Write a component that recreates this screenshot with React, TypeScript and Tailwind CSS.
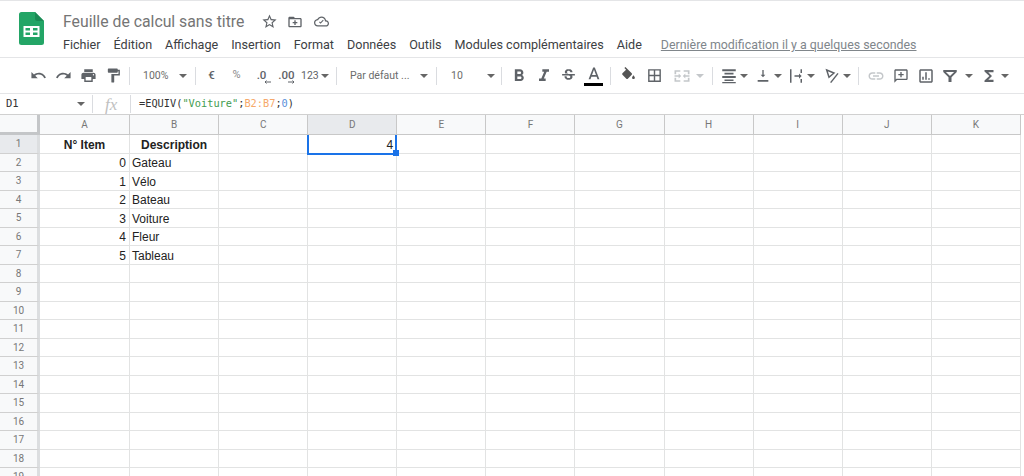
import type { ReactNode } from "react";

const menus = ["Fichier", "Édition", "Affichage", "Insertion", "Format", "Données", "Outils", "Modules complémentaires", "Aide"];
const columns = ["A", "B", "C", "D", "E", "F", "G", "H", "I", "J", "K"];
const rowNumbers = Array.from({ length: 19 }, (_, i) => i + 1);

// contenu des cellules : ligne -> [A, B, D]
const cells: Record<number, { a?: string; b?: string; d?: string; bold?: boolean }> = {
  1: { a: "N° Item", b: "Description", d: "4", bold: true },
  2: { a: "0", b: "Gateau" },
  3: { a: "1", b: "Vélo" },
  4: { a: "2", b: "Bateau" },
  5: { a: "3", b: "Voiture" },
  6: { a: "4", b: "Fleur" },
  7: { a: "5", b: "Tableau" },
};

function Icon({ d, size = 18, className = "" }: { d: string; size?: number; className?: string }) {
  return (
    <svg width={size} height={size} viewBox="0 0 24 24" fill="currentColor" fillRule="evenodd" className={className}>
      <path d={d} />
    </svg>
  );
}

function Caret({ className = "" }: { className?: string }) {
  return <span className={`block h-0 w-0 border-x-[4px] border-t-[4px] border-x-transparent border-t-[#666] ${className}`} />;
}

function Slot({ children, className = "w-[25px]" }: { children: ReactNode; className?: string }) {
  return <div className={`flex h-full shrink-0 items-center justify-center ${className}`}>{children}</div>;
}

function Sep({ className = "" }: { className?: string }) {
  return <div className={`h-[18px] w-px shrink-0 bg-[#dadce0] ${className}`} />;
}

function SmallArrow({ left = false, className = "" }: { left?: boolean; className?: string }) {
  return (
    <svg width="7" height="4" viewBox="0 0 7 4" fill="none" stroke="currentColor" strokeWidth="1" className={`absolute ${className}`}>
      {left ? <path d="M7 2H1M2.500.5L1 2l1.500 1.500" /> : <path d="M0 2h6M4.500.5L6 2 4.500 3.500" />}
    </svg>
  );
}

const paths = {
  undo: "M12.5 8c-2.65 0-5.05.99-6.9 2.6L2 7v9h9l-3.62-3.62c1.39-1.16 3.16-1.88 5.12-1.88 3.54 0 6.55 2.31 7.6 5.5l2.37-.78C21.08 11.03 17.15 8 12.5 8z",
  redo: "M18.4 10.6C16.55 8.99 14.15 8 11.5 8c-4.65 0-8.58 3.03-9.96 7.22L3.9 16c1.05-3.19 4.05-5.5 7.6-5.5 1.95 0 3.73.72 5.12 1.88L13 16h9V7l-3.6 3.6z",
  print: "M19 8H5c-1.66 0-3 1.34-3 3v6h4v4h12v-4h4v-6c0-1.66-1.34-3-3-3zm-3 11H8v-5h8v5zm3-7c-.55 0-1-.45-1-1s.45-1 1-1 1 .45 1 1-.45 1-1 1zm-1-9H6v4h12V3z",
  paint: "M18 4V3c0-.55-.45-1-1-1H5c-.55 0-1 .45-1 1v4c0 .55.45 1 1 1h12c.55 0 1-.45 1-1V6h1v4H9v11c0 .55.45 1 1 1h2c.55 0 1-.45 1-1v-9h8V4h-3z",
  bold: "M15.6 10.79c.97-.67 1.65-1.77 1.65-2.79 0-2.26-1.75-4-4-4H7v14h7.04c2.09 0 3.71-1.7 3.71-3.79 0-1.52-.86-2.82-2.15-3.42zM10 6.5h3c.83 0 1.5.67 1.5 1.5s-.67 1.5-1.5 1.5h-3v-3zm3.5 9H10v-3h3.5c.83 0 1.5.67 1.5 1.5s-.67 1.5-1.5 1.5z",
  italic: "M10 4v3h2.21l-3.42 8H6v3h8v-3h-2.21l3.42-8H18V4z",
  strike: "M7.24 8.75c-.26-.48-.39-1.03-.39-1.67 0-.61.13-1.16.4-1.67.26-.5.63-.93 1.11-1.29.48-.35 1.05-.63 1.7-.83.66-.19 1.39-.29 2.18-.29.81 0 1.54.11 2.21.34.66.22 1.23.54 1.69.94.47.4.83.88 1.08 1.43.25.55.38 1.15.38 1.81h-3.01c0-.31-.05-.59-.15-.85-.09-.27-.24-.49-.44-.68-.2-.19-.45-.33-.75-.44-.3-.1-.66-.16-1.06-.16-.39 0-.74.04-1.03.13-.29.09-.53.21-.72.36-.19.16-.34.34-.44.55-.1.21-.15.43-.15.66 0 .48.25.88.74 1.21.38.25.77.48 1.41.7H7.39c-.05-.08-.11-.17-.15-.25zM21 12v-2H3v2h9.62c.18.07.4.14.55.2.37.17.66.34.87.51.21.17.35.36.43.57.07.2.11.43.11.69 0 .23-.05.45-.14.66-.09.2-.23.38-.42.53-.19.15-.42.26-.71.35-.29.08-.63.13-1.01.13-.43 0-.83-.04-1.18-.13s-.66-.23-.91-.42c-.25-.19-.45-.44-.59-.75-.14-.31-.25-.76-.25-1.21H6.4c0 .55.08 1.13.24 1.58.16.45.37.85.65 1.21.28.35.6.66.98.92.37.26.78.48 1.22.65.44.17.9.3 1.38.39.48.08.96.13 1.44.13.8 0 1.53-.09 2.18-.28s1.21-.45 1.67-.79c.46-.34.82-.77 1.07-1.27s.38-1.07.38-1.71c0-.6-.1-1.14-.31-1.61-.05-.11-.11-.23-.17-.33H21z",
  textColor: "M11 3L5.5 17h2.25l1.12-3h6.25l1.12 3h2.25L13 3h-2zm-1.38 9L12 5.67 14.38 12H9.62z",
  fill: "M16.56 8.94L7.62 0 6.21 1.41l2.38 2.38-5.15 5.15c-.59.59-.59 1.54 0 2.12l5.5 5.5c.29.29.68.44 1.06.44s.77-.15 1.06-.44l5.5-5.5c.59-.58.59-1.53 0-2.12zM19 11.5s-2 2.17-2 3.5c0 1.1.9 2 2 2s2-.9 2-2c0-1.33-2-3.5-2-3.5z",
  borders: "M3 3v18h18V3H3zm8 16H5v-6h6v6zm0-8H5V5h6v6zm8 8h-6v-6h6v6zm0-8h-6V5h6v6z",
  merge: "M3 5h7v2H5v3H3V5zm11 0h7v5h-2V7h-5V5zM3 14h2v3h5v2H3v-5zm16 0h2v5h-7v-2h5v-3zM3 11h5V9l3 3-3 3v-2H3v-2zm18 2h-5v2l-3-3 3-3v2h5v2z",
  halign: "M3 3h18v2.500H3V3zm3 4.700h12v2.200H6V7.700zM3 12h18v2.500H3V12zm3 4.500h12v2H6v-2zM3 20h18v1.500H3V20z",
  valign: "M15.500 10h-2.500V3h-2v7H8.500l3.500 4 3.500-4zM4 18v2.500h16V18H4z",
  wrap: "M4 3h2v18H4V3zm14 0h2v5h-2V3zm0 13h2v5h-2v-5zm-8-5h6V8.500l3.500 3.500-3.500 3.500V13h-6v-2z",
  link: "M3.9 12c0-1.71 1.39-3.1 3.1-3.1h4V7H7c-2.76 0-5 2.24-5 5s2.24 5 5 5h4v-1.900H7c-1.710 0-3.100-1.390-3.100-3.100zM8 13h8v-2H8v2zm9-6h-4v1.900h4c1.710 0 3.100 1.390 3.100 3.100s-1.390 3.100-3.100 3.100h-4V17h4c2.760 0 5-2.240 5-5s-2.240-5-5-5z",
  comment: "M20 2H4c-1.100 0-2 .9-2 2v18l4-4h14c1.100 0 2-.9 2-2V4c0-1.100-.9-2-2-2zm0 14H5.170L4 17.170V4h16v12zM11 14h2v-3h3V9h-3V6h-2v3H8v2h3v3z",
  chart: "M19 3H5c-1.100 0-2 .9-2 2v14c0 1.100.9 2 2 2h14c1.100 0 2-.9 2-2V5c0-1.100-.9-2-2-2zm0 16H5V5h14v14zM7 13h2v4H7zm4-6h2v10h-2zm4 8h2v2h-2z",
  filter: "M3 4h18v2.500l-7 7V20h-4v-6.500l-7-7V4zm3.500 2.500h11L12 12 6.500 6.500z",
  sigma: "M18 4H6v2l6.500 6L6 18v2h12v-3h-7l5-5-5-5h7z",
  star: "M22 9.240l-7.190-.62L12 2 9.190 8.630 2 9.240l5.460 4.730L5.820 21 12 17.270 18.180 21l-1.630-7.030L22 9.240zM12 15.400l-3.760 2.270 1-4.280-3.320-2.880 4.380-.38L12 6.100l1.710 4.040 4.380.38-3.320 2.880 1 4.280L12 15.400z",
  folder: "M20 6h-8l-2-2H4c-1.100 0-2 .9-2 2v12c0 1.100.9 2 2 2h16c1.100 0 2-.9 2-2V8c0-1.100-.9-2-2-2zm0 12H4V8h16v10zm-9-1.500h2V14h2.500v-2H13V9.500h-2V12H8.500v2H11v2.500z",
  cloud: "M19.350 10.040C18.670 6.590 15.640 4 12 4 9.110 4 6.600 5.640 5.350 8.040 2.340 8.360 0 10.910 0 14c0 3.310 2.690 6 6 6h13c2.760 0 5-2.240 5-5 0-2.640-2.050-4.780-4.650-4.960zM19 18H6c-2.210 0-4-1.790-4-4s1.790-4 4-4h.71C7.370 7.690 9.480 6 12 6c3.040 0 5.500 2.460 5.500 5.500v.5H19c1.660 0 3 1.340 3 3s-1.340 3-3 3zm-8.500-2.500L8 13l1.200-1.200 1.300 1.300 3.800-3.800 1.200 1.200-5 5z",
};

function RotateIcon() {
  return (
    <svg width="16" height="16" viewBox="0 0 24 24" fill="none" stroke="currentColor" strokeWidth="2.200">
      <path d="M4 3l11 4.500-7.500 6.500L4 3z" />
      <path d="M21 8L10 22" />
    </svg>
  );
}

function Logo() {
  return (
    <svg width="25" height="33" viewBox="0 0 25 33" className="shrink-0">
      <path d="M2.500 0H16l9 9v21.500a2.500 2.500 0 0 1-2.500 2.500h-20A2.500 2.500 0 0 1 0 30.500v-28A2.500 2.500 0 0 1 2.500 0z" fill="#23a566" />
      <path d="M16 0l9 9h-6.500A2.500 2.500 0 0 1 16 6.500V0z" fill="#1b8a55" />
      <path d="M4.500 14h16v11h-16V14zm2 2v2.500H11V16H6.500zm7.500 0v2.500h4.500V16H14zm-7.500 4.500V23H11v-2.500H6.500zm7.500 0V23h4.500v-2.500H14z" fill="#fff" fillRule="evenodd" />
    </svg>
  );
}

function Toolbar() {
  return (
    <div className="flex h-[37px] items-center border-y border-[#e4e5e7] pl-[26px] text-[#5f6368]">
      <Slot><Icon d={paths.undo} size={17} /></Slot>
      <Slot><Icon d={paths.redo} size={17} /></Slot>
      <Slot><Icon d={paths.print} size={17} /></Slot>
      <Slot><Icon d={paths.paint} size={17} /></Slot>
      <Sep className="ml-[3px]" />
      <div className="ml-[13px] w-[26px] shrink-0 text-[10.5px] text-[#6b6b6b]">100%</div>
      <Slot className="ml-[10px] w-[8px]"><Caret /></Slot>
      <Sep className="ml-[8px]" />
      <Slot className="ml-[3px] w-[25px]"><span className="text-[11.5px] font-medium">€</span></Slot>
      <Slot><span className="text-[11px] text-[#888]">%</span></Slot>
      <Slot>
        <span className="relative text-[11.5px] font-medium">
          .0
          <SmallArrow left className="top-[13px] left-[7px]" />
        </span>
      </Slot>
      <Slot>
        <span className="relative text-[11.5px] font-medium">
          .00
          <SmallArrow className="top-[13px] left-[10px]" />
        </span>
      </Slot>
      <div className="ml-[2px] flex w-[26px] shrink-0 items-center gap-[2px] text-[10.5px]">123<Caret /></div>
      <Sep className="ml-[9px]" />
      <div className="ml-[13px] w-[61px] shrink-0 text-[10.5px] text-[#6b6b6b]">Par défaut ...</div>
      <Slot className="ml-[9px] w-[8px]"><Caret /></Slot>
      <Sep className="ml-[8px]" />
      <div className="ml-[14px] w-[36px] shrink-0 text-[10.5px] text-[#6b6b6b]">10</div>
      <Slot className="w-[8px]"><Caret /></Slot>
      <Sep className="ml-[6px]" />
      <Slot className="ml-[4px] w-[25px]"><Icon d={paths.bold} size={20} /></Slot>
      <Slot><Icon d={paths.italic} size={20} /></Slot>
      <Slot><Icon d={paths.strike} size={17} /></Slot>
      <Slot>
        <div className="flex flex-col items-center">
          <Icon d={paths.textColor} size={20} className="-mb-[2.5px]" />
          <div className="h-[3px] w-[19px] bg-black" />
        </div>
      </Slot>
      <Sep className="ml-[4px]" />
      <Slot className="ml-[5px] w-[25px]"><Icon d={paths.fill} size={17} className="text-[#555]" /></Slot>
      <Slot className="ml-[1px] w-[25px]"><Icon d={paths.borders} size={17} /></Slot>
      <div className="flex h-full shrink-0 items-center text-[#c4c7ca]">
        <Slot className="ml-[2px] w-[25px]"><Icon d={paths.merge} size={20} /></Slot>
        <Slot className="w-[12px]"><Caret className="border-t-[#c4c7ca]" /></Slot>
      </div>
      <Sep className="ml-[6px]" />
      <Slot className="ml-[6px] w-[19px]"><Icon d={paths.halign} size={18} /></Slot>
      <Slot className="w-[12px]"><Caret /></Slot>
      <Slot className="ml-[4px] w-[18px]"><Icon d={paths.valign} size={16} /></Slot>
      <Slot className="w-[12px]"><Caret /></Slot>
      <Slot className="ml-[3px] w-[18px]"><Icon d={paths.wrap} size={18} /></Slot>
      <Slot className="w-[12px]"><Caret /></Slot>
      <Slot className="ml-[6px] w-[18px]"><RotateIcon /></Slot>
      <Slot className="w-[12px]"><Caret /></Slot>
      <Sep className="ml-[5px]" />
      <Slot className="ml-[4px] w-[25px]"><Icon d={paths.link} size={18} className="text-[#c4c7ca]" /></Slot>
      <Slot><Icon d={paths.comment} size={16} /></Slot>
      <Slot><Icon d={paths.chart} size={18} /></Slot>
      <Slot className="ml-[1px] w-[22px]"><Icon d={paths.filter} size={18} /></Slot>
      <Slot className="ml-[2px] w-[12px]"><Caret /></Slot>
      <Slot className="ml-[2px] w-[24px]"><Icon d={paths.sigma} size={18} /></Slot>
      <Slot className="w-[8px]"><Caret className="border-x-[3px] border-t-[3px]" /></Slot>
    </div>
  );
}

function FormulaBar() {
  return (
    <div className="flex h-[20px] items-center text-[#444]">
      <div className="w-[77px] shrink-0 pl-[6px] font-['DejaVu_Sans_Mono',monospace] text-[10.5px] text-[#333]">D1</div>
      <Caret className="shrink-0 border-x-[3px] border-t-[3px]" />
      <Sep className="ml-[7px] h-[15px]" />
      <div className="ml-[12px] w-[25px] shrink-0 font-['Liberation_Serif',serif] text-[17px] leading-none text-[#c0c0c0] italic">fx</div>
      <Sep className="h-[15px] bg-[#b0b0b0]" />
      <div className="ml-[8px] font-['DejaVu_Sans_Mono',monospace] text-[10.3px] whitespace-pre text-[#333]">
        =EQUIV(<span className="text-[#3f9c4f]">"Voiture"</span>;<span className="text-[#f6a96b]">B2:B7</span>;<span className="text-[#5b8fd9]">0</span>)
      </div>
    </div>
  );
}

function Sheet() {
  return (
    <div className="relative grid grid-cols-[40px_90px_repeat(10,89.1px)] grid-rows-[20px_repeat(19,18.5px)] border-t border-[#d0d0d0] font-['Roboto',sans-serif]">
      {/* coin + en-têtes de colonnes */}
      <div className="border-r-[3px] border-b-[3px] border-r-[#c4c6c8] border-b-[#c4c6c8] bg-[#f8f9fa]" />
      {columns.map((col) => (
        <div
          key={col}
          className={`flex items-center justify-center border-r border-b border-[#c8c8c8] text-[10px] text-[#777] ${col === "D" ? "bg-[#e8eaed]" : "bg-[#f8f9fa]"}`}
        >
          {col}
        </div>
      ))}
      {rowNumbers.map((row) => {
        const cell = cells[row];
        return [
          <div
            key={`h${row}`}
            className={`flex items-center justify-center border-r-[3px] border-b border-r-[#dcdee0] border-b-[#d0d0d0] text-[10px] text-[#777] ${row === 1 ? "bg-[#e8eaed]" : "bg-[#f8f9fa]"}`}
          >
            {row}
          </div>,
          ...columns.map((col) => {
            const text = col === "A" ? cell?.a : col === "B" ? cell?.b : col === "D" ? cell?.d : undefined;
            let align = "justify-start pl-[2px]";
            if (col === "A" || col === "D") align = "justify-end pr-[3px]";
            if (cell?.bold && col !== "D") align = "justify-center";
            return (
              <div
                key={`${col}${row}`}
                className={`flex items-center overflow-hidden border-r border-b border-[#e2e3e3] pt-[2px] font-['Liberation_Sans',Arial,sans-serif] text-[12px] leading-none whitespace-nowrap text-[#222] ${align} ${cell?.bold && col !== "D" ? "font-bold" : ""}`}
              >
                {text}
              </div>
            );
          }),
        ];
      })}
      {/* sélection de D1 */}
      <div className="absolute top-[20px] left-[307px] h-[19.5px] w-[90px] border-x-2 border-b-2 border-[#1a73e8]" />
      <div className="absolute top-[35px] left-[393px] h-[6px] w-[6px] bg-[#1a73e8]" />
    </div>
  );
}

export default function App() {
  return (
    <div className="h-[476px] w-[1024px] overflow-hidden bg-white font-['Roboto',sans-serif]">
      <div className="flex h-[57px] border-t border-[#e4e5e7] pt-[11px] pl-[19px]">
        <Logo />
        <div className="mt-[1px] ml-[19px] flex flex-col">
          <div className="flex h-[17px] items-center">
            <span className="w-[182px] text-[15.8px] leading-none whitespace-nowrap text-[#757575]">Feuille de calcul sans titre</span>
            <span className="ml-[16px] flex items-center text-[#5f6368]">
              <Icon d={paths.star} size={17} />
              <Icon d={paths.folder} size={16} className="ml-[9px]" />
              <Icon d={paths.cloud} size={15} className="ml-[11px]" />
            </span>
          </div>
          <div className="mt-[6px] flex items-center gap-[13px] text-[12.6px] whitespace-nowrap text-[#3c4043]">
            {menus.map((item) => (
              <span key={item}>{item}</span>
            ))}
            <span className="ml-[6px] text-[12.4px] text-[#80868b] underline">Dernière modification il y a quelques secondes</span>
          </div>
        </div>
      </div>
      <Toolbar />
      <FormulaBar />
      <Sheet />
    </div>
  );
}
